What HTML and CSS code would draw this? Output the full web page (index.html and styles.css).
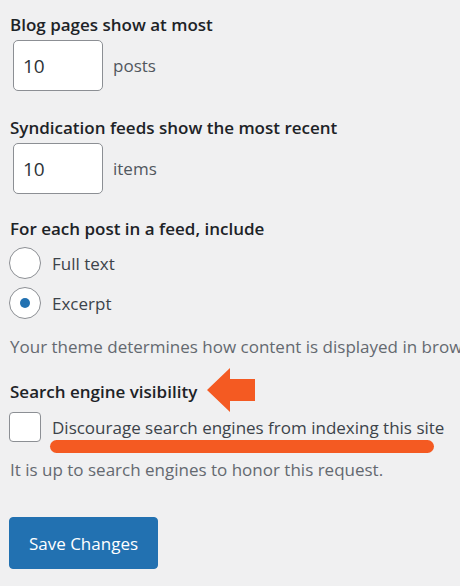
FILE: index.html
```html
<!DOCTYPE html>
<html lang="en">
<head>
  <meta charset="UTF-8">
  <meta name="viewport" content="width=device-width, initial-scale=1.0">
  <title>Reading Settings</title>
  <link rel="stylesheet" href="styles.css">
</head>
<body>
  <div class="settings">
    <div class="field">
      <label class="field-title" for="posts_per_page">Blog pages show at most</label>
      <div class="number-row">
        <input type="text" id="posts_per_page" class="small-text" value="10">
        <span class="unit">posts</span>
      </div>
    </div>

    <div class="field tight">
      <label class="field-title" for="posts_per_rss">Syndication feeds show the most recent</label>
      <div class="number-row">
        <input type="text" id="posts_per_rss" class="small-text" value="10">
        <span class="unit">items</span>
      </div>
    </div>

    <div class="field with-desc">
      <div class="field-title">For each post in a feed, include</div>
      <div class="choices">
        <label class="choice"><span class="radio"></span>Full text</label>
        <label class="choice"><span class="radio checked"></span>Excerpt</label>
      </div>
      <p class="description nowrap">Your theme determines how content is displayed in browsers.</p>
    </div>

    <div class="field with-desc">
      <div class="field-title">Search engine visibility
        <svg class="arrow" width="50" height="44" viewBox="0 0 50 44">
          <polygon points="0,22 23,0 23,11 48,11 48,33 23,33 23,44" fill="#f45a22"/>
        </svg>
      </div>
      <label class="choice check-row">
        <span class="checkbox"></span>
        <span class="marked">Discourage search engines from indexing this site</span>
      </label>
      <p class="description">It is up to search engines to honor this request.</p>
    </div>

    <div class="submit">
      <button class="button-primary">Save Changes</button>
    </div>
  </div>
</body>
</html>
```

FILE: styles.css
```css
html, body {
  margin: 0;
  padding: 0;
  background: #f0f0f1;
  overflow: hidden;
}
body {
  font-family: "Open Sans", "Noto Sans", sans-serif;
  font-size: 17px;
  color: #1d2327;
}
.settings {
  padding: 13px 0 0 10px;
  width: 600px;
}
.field {
  margin-bottom: 25px;
}
.field.tight {
  margin-bottom: 23px;
}
.field.with-desc {
  margin-bottom: 14px;
}
.field-title {
  display: flex;
  align-items: center;
  font-weight: 600;
  font-size: 17px;
  line-height: 24px;
}
.number-row {
  display: flex;
  align-items: center;
  gap: 10px;
  margin-top: 3px;
}
.small-text {
  width: 90px;
  height: 51px;
  box-sizing: border-box;
  margin-left: 3px;
  padding: 0 9px;
  border: 1px solid #8c8f94;
  border-radius: 5px;
  background: #fff;
  font-family: inherit;
  font-size: 19px;
  color: #2c3338;
}
.unit {
  font-size: 17px;
  color: #50575e;
}
.choices {
  margin-top: 2px;
}
.choice {
  display: flex;
  align-items: center;
  gap: 11px;
  height: 40px;
  margin-left: -1px;
  color: #3c434a;
}
.radio {
  width: 30px;
  height: 30px;
  border: 1px solid #8c8f94;
  border-radius: 50%;
  background: #fff;
  display: flex;
  align-items: center;
  justify-content: center;
}
.radio.checked::after {
  content: "";
  width: 10px;
  height: 10px;
  border-radius: 50%;
  background: #2271b1;
}
.description {
  margin: 12px 0 0;
  color: #646970;
}
.nowrap {
  white-space: nowrap;
}
.arrow {
  margin-left: 10px;
  margin-top: -4px;
}
.check-row {
  margin-top: -5px;
}
.checkbox {
  width: 30px;
  height: 28px;
  border: 1px solid #8c8f94;
  border-radius: 4px;
  background: #fff;
}
.marked {
  position: relative;
}
.marked::after {
  content: "";
  position: absolute;
  left: -2px;
  right: 10px;
  bottom: -14px;
  height: 13px;
  border-radius: 7px;
  background: #f45a22;
}
.check-row + .description {
  margin-top: 11px;
}
.submit {
  padding-top: 22px;
}
.button-primary {
  margin-left: -1px;
  width: 149px;
  height: 52px;
  border: 1px solid #2271b1;
  border-radius: 4px;
  background: #2271b1;
  color: #fff;
  font-family: inherit;
  font-size: 17px;
}
```
